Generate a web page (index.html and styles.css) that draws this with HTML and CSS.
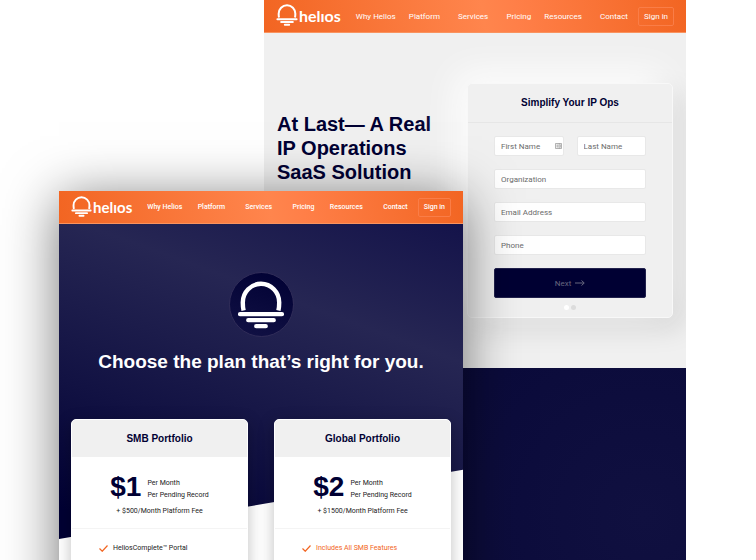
FILE: index.html
```html
<!DOCTYPE html>
<html lang="en">
<head>
<meta charset="utf-8">
<title>Helios</title>
<link rel="stylesheet" href="styles.css">
</head>
<body>
<svg class="defs" aria-hidden="true">
  <symbol id="sun" viewBox="0 0 48 48">
    <path d="M6.6 29.6Q5.8 26 5.8 21.4A18.2 18.6 0 0 1 42.2 21.4Q42.2 26 41.4 29.6" fill="none" stroke="currentColor" stroke-width="4.4"/>
    <path d="M3 33.2H45M11.2 39.2H36.8M19.2 45.2H28.8" fill="none" stroke="currentColor" stroke-width="4.2" stroke-linecap="round"/>
  </symbol>
</svg>
<div class="stage">
  <section class="window home">
    <header class="topbar">
      <a class="brand" href="#"><svg class="brand-mark" aria-hidden="true"><use href="#sun"/></svg><span>helıos</span></a>
      <nav class="nav">
        <a href="#">Why Helios</a>
        <a class="menu" href="#">Platform</a>
        <a class="menu" href="#">Services</a>
        <a href="#">Pricing</a>
        <a class="menu" href="#">Resources</a>
        <a href="#">Contact</a>
      </nav>
      <a class="signin" href="#">Sign in</a>
    </header>
    <div class="intro">
      <h1 class="headline">At Last— A Real<br>IP Operations<br>SaaS Solution</h1>
      <form class="signup">
        <h2 class="signup-title">Simplify Your IP Ops</h2>
        <div class="fields">
          <div class="pair">
            <div class="autofill">
              <input type="text" aria-label="First Name" placeholder="First Name">
              <svg class="card-icon" viewBox="0 0 14 12" aria-hidden="true"><path d="M1 1H13V11H1ZM8.5 1V11M3 4H7M3 6H7M3 8H7M10 4H12M10 6H12M10 8H12" fill="none" stroke="currentColor" stroke-width="1.3"/></svg>
            </div>
            <input type="text" aria-label="Last Name" placeholder="Last Name">
          </div>
          <input type="text" aria-label="Organization" placeholder="Organization">
          <input type="email" aria-label="Email Address" placeholder="Email Address">
          <input type="tel" aria-label="Phone" placeholder="Phone">
          <button class="next" type="button">Next <svg class="arrow" viewBox="0 0 20 12" aria-hidden="true"><path d="M0 6H18M13 1L18.5 6L13 11" fill="none" stroke="currentColor" stroke-width="2"/></svg></button>
        </div>
        <div class="dots"><i class="dot on"></i><i class="dot"></i></div>
      </form>
    </div>
    <div class="band"></div>
  </section>

  <section class="window pricing">
    <header class="topbar">
      <a class="brand" href="#"><svg class="brand-mark" aria-hidden="true"><use href="#sun"/></svg><span>helıos</span></a>
      <nav class="nav">
        <a href="#">Why Helios</a>
        <a class="menu" href="#">Platform</a>
        <a class="menu" href="#">Services</a>
        <a href="#">Pricing</a>
        <a class="menu" href="#">Resources</a>
        <a href="#">Contact</a>
      </nav>
      <a class="signin" href="#">Sign in</a>
    </header>
    <div class="plans-page">
      <div class="badge"><svg class="badge-mark" aria-hidden="true"><use href="#sun"/></svg></div>
      <h1 class="plans-title">Choose the plan that’s right for you.</h1>
      <div class="plans">
        <article class="plan">
          <h2 class="plan-name">SMB Portfolio</h2>
          <div class="cost">
            <div class="price"><strong>$1</strong><span>Per Month<br>Per Pending Record</span></div>
            <p class="fee">+ $500/Month Platform Fee</p>
          </div>
          <ul class="features">
            <li><svg class="check" viewBox="0 0 18 14" aria-hidden="true"><path d="M1 7L6.5 12.5L17 1" fill="none" stroke="currentColor" stroke-width="2.4"/></svg>HeliosComplete™ Portal</li>
          </ul>
        </article>
        <article class="plan">
          <h2 class="plan-name">Global Portfolio</h2>
          <div class="cost">
            <div class="price"><strong>$2</strong><span>Per Month<br>Per Pending Record</span></div>
            <p class="fee">+ $1500/Month Platform Fee</p>
          </div>
          <ul class="features">
            <li class="highlight"><svg class="check" viewBox="0 0 18 14" aria-hidden="true"><path d="M1 7L6.5 12.5L17 1" fill="none" stroke="currentColor" stroke-width="2.4"/></svg>Includes All SMB Features</li>
          </ul>
        </article>
      </div>
    </div>
  </section>
</div>
</body>
</html>
```
FILE: styles.css
```css
:root {
  --navy: #000033;
  --orange: #f26522;
  --grey: #f0f0f0;
}

* { box-sizing: border-box; }

body {
  margin: 0;
  background: #fff;
  font-family: Roboto, "Liberation Sans", sans-serif;
  font-size: 8px;
  color: #222;
}

h1, h2, p, ul { margin: 0; padding: 0; }

h1, h2, strong { font-family: "Liberation Sans", Arial, sans-serif; font-weight: 700; }

a { color: inherit; text-decoration: none; }

.defs { position: absolute; width: 0; height: 0; }

/* Two browser pages overlapping on shared grid columns */
.stage {
  display: grid;
  grid-template-columns: 59fr 205fr 199fr 223fr 70fr;
  height: 100vh;
  overflow: hidden;
}

.window { grid-row: 1; display: flex; flex-direction: column; }

.home { grid-column: 3 / 5; overflow: hidden; background: var(--grey); }

.pricing {
  grid-column: 2 / 4;
  margin-top: 191px;
  z-index: 1;
  background: #fff;
  box-shadow: 0 8px 52px rgba(0, 0, 0, 0.54);
}

.topbar {
  display: flex;
  align-items: center;
  height: 33px;
  padding: 0 12px;
  color: #fff;
  border-bottom: 1px solid #f9935f;
  background: linear-gradient(80deg, #f26522, #ff854d 52%, #ff7f48 60%, #f26522);
}

.brand {
  display: flex;
  align-items: center;
  gap: 1px;
  font: 700 16px/20px Lato, sans-serif;
}

.brand-mark { width: 22px; height: 22px; margin-bottom: 2px; }

.nav {
  flex: 1;
  display: flex;
  justify-content: space-between;
  margin: 0 10px 0 15px;
  white-space: nowrap;
}

.nav .menu { padding-right: 5px; }

.signin {
  padding: 0 5px;
  line-height: 17px;
  border: 1px solid #fa7d47;
  border-radius: 2px;
}

.pricing .topbar { font-size: 7px; font-weight: 500; }
.pricing .brand { font-size: 15px; }
.pricing .brand-mark { width: 21px; height: 21px; }

.intro {
  display: grid;
  grid-template-columns: 1fr 206px;
  align-items: start;
  padding: 50px 13px 50px 13px;
}

.headline {
  margin-top: 29px;
  font-size: 20px;
  line-height: 24px;
  color: var(--navy);
}

.signup {
  background: var(--grey);
  border: 1px solid #f8f8f8;
  border-radius: 5px;
  box-shadow: -10px -10px 36px #fff, 10px 10px 28px rgba(0, 0, 0, 0.12);
}

.signup-title {
  border-bottom: 1px solid #e6e6e6;
  font-size: 10px;
  line-height: 38px;
  text-align: center;
  color: var(--navy);
}

.fields {
  display: grid;
  gap: 13px;
  padding: 13px 26px 0 26px;
}

.pair { display: grid; grid-template-columns: 1fr 1fr; gap: 13px; }

.autofill { position: relative; }

.card-icon {
  position: absolute;
  right: 2px;
  top: 7px;
  width: 7px;
  height: 6px;
  color: #888;
}

input {
  display: block;
  width: 100%;
  min-width: 0;
  height: 20px;
  padding: 0 6px;
  border: 1px solid #e8e8e8;
  border-radius: 2px;
  background: #fff;
  font: 400 8px Roboto, sans-serif;
}

input::placeholder { color: #6c6c6c; opacity: 1; }

.next {
  display: flex;
  align-items: center;
  justify-content: center;
  gap: 4px;
  height: 30px;
  padding: 0;
  border: 1px solid #22224d;
  border-radius: 2px;
  background: var(--navy);
  color: #66667f;
  font: 400 8px Roboto, sans-serif;
}

.arrow { width: 10px; height: 6px; }

.dots {
  display: flex;
  justify-content: center;
  gap: 2px;
  padding: 7px 0;
}

.dot { width: 5px; height: 5px; border-radius: 50%; background: #dcdcdc; }
.dot.on { background: #fff; }

.band {
  position: relative;
  flex: 1;
  min-height: 192px;
  background: radial-gradient(circle at 90% 60%, #101040, #0b0b3b 50%, #080838);
}

.plans-page {
  position: relative;
  isolation: isolate;
  padding: 48px 12px 0;
}

/* Slanted navy backdrop */
.plans-page::before {
  content: "";
  position: absolute;
  inset: 0 0 auto;
  z-index: -1;
  height: 315px;
  background: linear-gradient(20deg, #000033 5%, #121243 35%, #262653 70%, #14134a 100%);
  clip-path: polygon(0 0, 100% 0, 100% 78%, 0 100%);
}

.badge {
  display: grid;
  place-items: center;
  width: 65px;
  height: 65px;
  margin: 0 auto;
  border: 1px solid #302c58;
  border-radius: 50%;
  background: linear-gradient(200deg, #000033, #121245);
  color: #fff;
}

.badge-mark { width: 48px; height: 48px; }

.plans-title {
  margin-top: 13px;
  font-size: 19px;
  line-height: 24px;
  text-align: center;
  white-space: nowrap;
  color: #fff;
}

.plans {
  display: grid;
  grid-template-columns: 1fr 1fr;
  gap: 26px;
  margin-top: 45px;
}

.plan {
  border: 1px solid #fff;
  border-radius: 5px;
  background: #fff;
  box-shadow: 0 4px 16px rgba(0, 0, 0, 0.25);
}

.plan-name {
  border-radius: 4px 4px 0 0;
  background: var(--grey);
  font-size: 10px;
  line-height: 37px;
  text-align: center;
  color: var(--navy);
}

.cost {
  height: 72px;
  padding-top: 14px;
  border-bottom: 1px solid #f4f4f4;
}

.price {
  display: flex;
  align-items: center;
  justify-content: center;
  gap: 6px;
  font-size: 7px;
  line-height: 12px;
}

.price span { padding-top: 4px; }

.price strong { font-size: 28px; line-height: 32px; color: var(--navy); }

.fee { font-size: 7px; line-height: 16px; text-align: center; }

.features {
  padding: 12px 27px 60px;
  list-style: none;
  font-size: 7px;
  line-height: 14px;
}

.features li { display: flex; align-items: center; gap: 5px; }

.check { width: 9px; height: 7px; color: var(--orange); }

.highlight { color: var(--orange); }
```
